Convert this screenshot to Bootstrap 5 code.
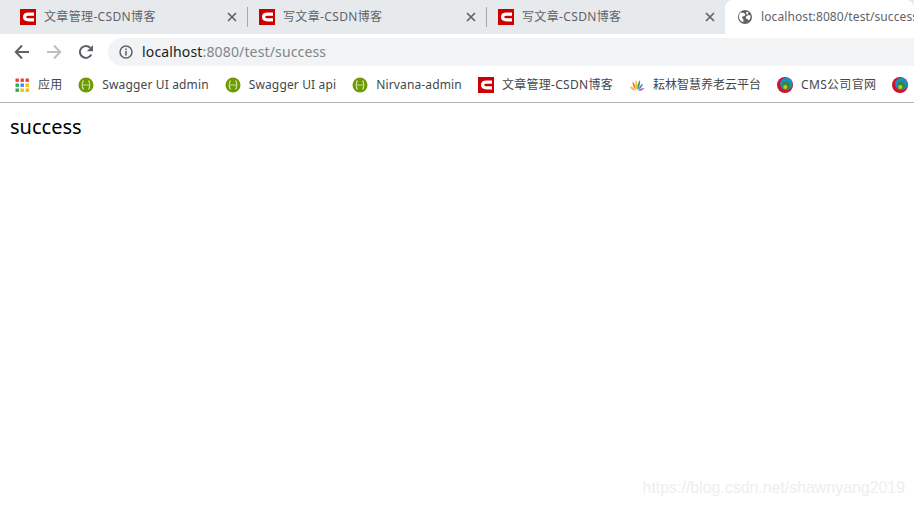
<!DOCTYPE html>
<html lang="en">
<head>
    <meta charset="UTF-8">
    <meta name="viewport" content="width=device-width, initial-scale=1">
    <title>localhost:8080/test/success</title>
    <link href="https://cdn.jsdelivr.net/npm/bootstrap@5.3.3/dist/css/bootstrap.min.css" rel="stylesheet">
    <style>
        html, body { height: 100%; overflow: hidden; }
        body { font-family: "Noto Sans", "Noto Sans CJK SC", sans-serif; background: #fff; }
        .tab-strip { height: 34px; background: #e7eaed; padding-left: 9px; }
        .chrome-tab { width: 238px; height: 34px; padding: 0 8px 0 11px; font-size: 12px; letter-spacing: .35px; color: #5f6368; white-space: nowrap; overflow: hidden; flex: none; }
        .tab-sep { width: 1px; height: 20px; background: #a4a7ab; margin-top: 7px; flex: none; }
        .tab-text { margin-left: 8px; flex: 1; overflow: hidden; line-height: 34px; }
        .tab-close { width: 10px; height: 10px; flex: none; margin-right: 2px; }
        .tab-live { flex: 1; width: auto; background: #fff; border-radius: 8px 8px 0 0; padding-left: 13px; padding-right: 0; min-width: 0; letter-spacing: .1px; }
        .tab-live .tab-text { margin-left: 9px; }
        .tool-row { height: 36px; padding: 4px 0 0 6px; }
        .tool-btn { width: 16px; height: 16px; flex: none; }
        .tool-cell { width: 32px; display: flex; justify-content: center; align-items: center; flex: none; height: 28px; }
        .omni-box { flex: 1; height: 28px; margin-left: 6px; background: #f1f3f4; border-radius: 14px 0 0 14px; padding-left: 11px; font-size: 14px; letter-spacing: .15px; color: #80868b; line-height: 28px; }
        .omni-box b { font-weight: 400; color: #202124; }
        .omni-url { margin-left: 9px; }
        .mark-row { height: 33px; border-bottom: 1px solid #b4b4b4; font-size: 12px; letter-spacing: .14px; color: #43474b; padding: 0 0 3px 14px; white-space: nowrap; overflow: hidden; }
        .mark-item { margin-right: 16px; flex: none; }
        .mark-item svg { flex: none; margin-right: 8px; }
        .mark-wide { letter-spacing: .3px; }
        .mark-flat { letter-spacing: 0; }
        .page-body { padding: 12px 10px; font-size: 20px; line-height: 24px; color: #000; }
        .water-mark { position: absolute; right: 9px; bottom: 8px; font-family: "Liberation Sans", sans-serif; font-size: 15.9px; color: #eeeeee; }
    </style>
</head>
<body>
    <svg width="0" height="0" class="position-absolute">
        <defs>
            <symbol id="csdn" viewBox="0 0 16 16">
                <rect width="16" height="16" fill="#cc0000"/>
                <path d="M14 5.200H8.500C6 5.200 4.600 6.400 4.600 8S6 10.800 8.500 10.800H14" fill="none" stroke="#fff" stroke-width="3.200"/>
            </symbol>
            <symbol id="swagger" viewBox="0 0 16 16">
                <circle cx="8" cy="8" r="7.500" fill="#6c9a00"/>
                <path d="M5.500 3.500C3.800 5.500 3.800 10.500 5.500 12.500M10.500 3.500C12.200 5.500 12.200 10.500 10.500 12.500M5 8h6" fill="none" stroke="#cfe0a0" stroke-width="1.200"/>
            </symbol>
            <symbol id="cms" viewBox="0 0 16 16">
                <circle cx="8" cy="8" r="8" fill="#d0102c"/>
                <circle cx="9.300" cy="7" r="6.200" fill="#1b8fc9"/>
                <circle cx="9" cy="8.500" r="4" fill="#2f8a3a"/>
                <circle cx="8.300" cy="10" r="2.100" fill="#c9c818"/>
            </symbol>
            <symbol id="close-x" viewBox="0 0 10 10">
                <path d="M1 1l8 8M9 1l-8 8" stroke="#5f6368" stroke-width="1.700" fill="none"/>
            </symbol>
        </defs>
    </svg>

    <div class="tab-strip d-flex">
        <div class="chrome-tab d-flex align-items-center">
            <svg width="16" height="16"><use href="#csdn"/></svg>
            <span class="tab-text">文章管理-CSDN博客</span>
            <svg class="tab-close"><use href="#close-x"/></svg>
        </div>
        <div class="tab-sep"></div>
        <div class="chrome-tab d-flex align-items-center">
            <svg width="16" height="16"><use href="#csdn"/></svg>
            <span class="tab-text">写文章-CSDN博客</span>
            <svg class="tab-close"><use href="#close-x"/></svg>
        </div>
        <div class="tab-sep"></div>
        <div class="chrome-tab d-flex align-items-center">
            <svg width="16" height="16"><use href="#csdn"/></svg>
            <span class="tab-text">写文章-CSDN博客</span>
            <svg class="tab-close"><use href="#close-x"/></svg>
        </div>
        <div class="chrome-tab tab-live d-flex align-items-center">
            <svg width="14" height="14" viewBox="0 0 14 14">
                <circle cx="7" cy="7" r="7" fill="#5f6368"/>
                <path d="M2.500 2.500L6 3l1.500 1.500-1 1.500-2 .5-.5 1.500L5.500 9.500v2l-1 .5C2.500 11 1 9 1 7 1 5 1.500 3.500 2.500 2.500zM9 1.500l1.500 1-1 1.500.5 1 2.500.5c.3 2-.5 4-2 5l-1-1.500-1.500-.5v-2l2-1-1.500-1.500L8 3z" fill="#fff"/>
            </svg>
            <span class="tab-text">localhost:8080/test/success</span>
        </div>
    </div>

    <div class="tool-row d-flex">
        <div class="tool-cell">
            <svg class="tool-btn" viewBox="0 0 16 16"><path d="M15 8H2.500M8 1.500L1.800 8 8 14.500" fill="none" stroke="#5f6368" stroke-width="2"/></svg>
        </div>
        <div class="tool-cell">
            <svg class="tool-btn" viewBox="0 0 16 16"><path d="M1 8h12.500M8 1.500L14.200 8 8 14.500" fill="none" stroke="#bcbfc3" stroke-width="2"/></svg>
        </div>
        <div class="tool-cell">
            <svg class="tool-btn" viewBox="0 0 16 16"><path d="M13.300 10.500A6 6 0 1 1 12.300 3.800" fill="none" stroke="#5f6368" stroke-width="2"/><path d="M15 1v6.200H8.800z" fill="#5f6368"/></svg>
        </div>
        <div class="omni-box d-flex align-items-center">
            <svg width="14" height="14" viewBox="0 0 14 14">
                <circle cx="7" cy="7" r="6" fill="none" stroke="#5f6368" stroke-width="1.500"/>
                <rect x="6.200" y="6" width="1.600" height="4.500" fill="#5f6368"/>
                <rect x="6.200" y="3.500" width="1.600" height="1.600" fill="#5f6368"/>
            </svg>
            <span class="omni-url"><b>localhost</b>:8080/test/success</span>
        </div>
    </div>

    <div class="mark-row d-flex align-items-center">
        <div class="mark-item d-flex align-items-center">
            <svg width="16" height="16" viewBox="-1.500 -1.500 16 16">
                <rect x="0" y="0" width="3.400" height="3.400" fill="#ea4335"/><rect x="5" y="0" width="3.400" height="3.400" fill="#ea4335"/><rect x="10" y="0" width="3.400" height="3.400" fill="#ea4335"/>
                <rect x="0" y="5" width="3.400" height="3.400" fill="#34a853"/><rect x="5" y="5" width="3.400" height="3.400" fill="#4285f4"/><rect x="10" y="5" width="3.400" height="3.400" fill="#fbbc05"/>
                <rect x="0" y="10" width="3.400" height="3.400" fill="#34a853"/><rect x="5" y="10" width="3.400" height="3.400" fill="#fbbc05"/><rect x="10" y="10" width="3.400" height="3.400" fill="#fbbc05"/>
            </svg>
            <span>应用</span>
        </div>
        <div class="mark-item d-flex align-items-center"><svg width="16" height="16"><use href="#swagger"/></svg><span>Swagger UI admin</span></div>
        <div class="mark-item d-flex align-items-center"><svg width="16" height="16"><use href="#swagger"/></svg><span>Swagger UI api</span></div>
        <div class="mark-item d-flex align-items-center"><svg width="16" height="16"><use href="#swagger"/></svg><span>Nirvana-admin</span></div>
        <div class="mark-item mark-wide d-flex align-items-center"><svg width="16" height="16"><use href="#csdn"/></svg><span>文章管理-CSDN博客</span></div>
        <div class="mark-item mark-flat d-flex align-items-center">
            <svg width="16" height="16" viewBox="0 0 16 16">
                <path d="M1 9.500C3 9.500 5 11 6 13.500 3.500 13.500 2 12 1 9.500z" fill="#f2b632"/>
                <path d="M3.500 4.500C5.500 6 6.800 9.500 6.800 13 4.500 11 3.300 8 3.500 4.500z" fill="#ef7f2d"/>
                <path d="M7 2.500C8.500 5 8.500 10 7.500 13 6 10.500 5.800 6 7 2.500z" fill="#f0c33c"/>
                <path d="M11 3C11.500 6.500 10.500 10.500 8.300 13 7.800 9.500 8.800 5.500 11 3z" fill="#3f9e6e"/>
                <path d="M14 6.500C13.500 9.500 11.500 12 9.200 13.500 9.500 10.500 11.300 8 14 6.500z" fill="#3a8fd0"/>
                <path d="M15.500 11C14 13 12 14 9.500 14 11 12 13 11 15.500 11z" fill="#c83f9c"/>
            </svg>
            <span>耘林智慧养老云平台</span>
        </div>
        <div class="mark-item mark-wide d-flex align-items-center"><svg width="16" height="16"><use href="#cms"/></svg><span>CMS公司官网</span></div>
        <div class="mark-item d-flex align-items-center"><svg width="16" height="16"><use href="#cms"/></svg></div>
    </div>

    <div class="page-body">success</div>
    <div class="water-mark">https://blog.csdn.net/shawnyang2019</div>

    <script src="https://cdn.jsdelivr.net/npm/bootstrap@5.3.3/dist/js/bootstrap.bundle.min.js"></script>
</body>
</html>
